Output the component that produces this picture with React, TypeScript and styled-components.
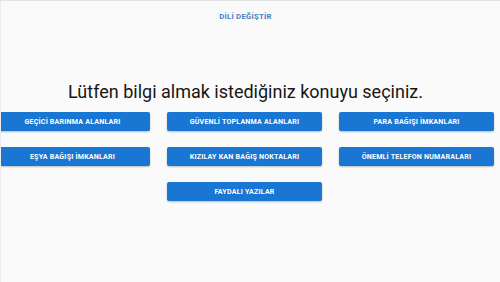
import styled, { createGlobalStyle } from 'styled-components';

const GlobalStyle = createGlobalStyle`
  html, body {
    margin: 0;
    padding: 0;
    background: #fafafa;
  }
  body {
    font-family: Roboto, 'Liberation Sans', sans-serif;
  }
`;

const topics = [
  'GEÇİCİ BARINMA ALANLARI',
  'GÜVENLİ TOPLANMA ALANLARI',
  'PARA BAĞIŞI İMKANLARI',
  'EŞYA BAĞIŞI İMKANLARI',
  'KIZILAY KAN BAĞIŞ NOKTALARI',
  'ÖNEMLİ TELEFON NUMARALARI',
  'FAYDALI YAZILAR',
];

const App = () => {
  return (
    <Page>
      <GlobalStyle />
      <LangBar>
        <LangButton type='button'>DİLİ DEĞİŞTİR</LangButton>
      </LangBar>
      <Title>Lütfen bilgi almak istediğiniz konuyu seçiniz.</Title>
      <TopicGrid>
        {topics.map((topic, index) => (
          <TopicButton
            key={topic}
            type='button'
            $center={index === topics.length - 1}
          >
            {topic}
          </TopicButton>
        ))}
      </TopicGrid>
    </Page>
  );
};

const Page = styled.div`
  width: 500px;
  height: 282px;
  box-sizing: border-box;
  border-top: 1px solid #e2e2e2;
  border-left: 1px solid #ececec;
  background: #fafafa;
  overflow: hidden;
`;

const LangBar = styled.div`
  display: flex;
  justify-content: center;
  padding-top: 9px;
`;

const LangButton = styled.button`
  background: none;
  border: none;
  padding: 2px 6px;
  margin-left: -10px;
  font-family: Roboto, 'Liberation Sans', sans-serif;
  font-size: 7.8px;
  font-weight: 700;
  letter-spacing: 0.2px;
  color: #4581c0;
`;

const Title = styled.h1`
  margin: 58px 0 0 -10px;
  text-align: center;
  font-family: Roboto, 'Liberation Sans', sans-serif;
  font-weight: 400;
  font-size: 18px;
  line-height: 22px;
  color: #161616;
`;

const TopicGrid = styled.div`
  display: grid;
  grid-template-columns: repeat(3, 155px);
  column-gap: 17px;
  row-gap: 16px;
  margin: 9px 0 0 -6px;
`;

const TopicButton = styled.button<{ $center?: boolean }>`
  grid-column: ${(p) => (p.$center ? '2' : 'auto')};
  height: 19px;
  padding: 0;
  border: none;
  border-radius: 2px;
  background: #1976d2;
  color: #ffffff;
  font-family: Roboto, 'Liberation Sans', sans-serif;
  font-size: 7.1px;
  font-weight: 700;
  letter-spacing: 0.2px;
  box-shadow: 0 1px 2px rgba(0, 0, 0, 0.25);
`;

export default App;
